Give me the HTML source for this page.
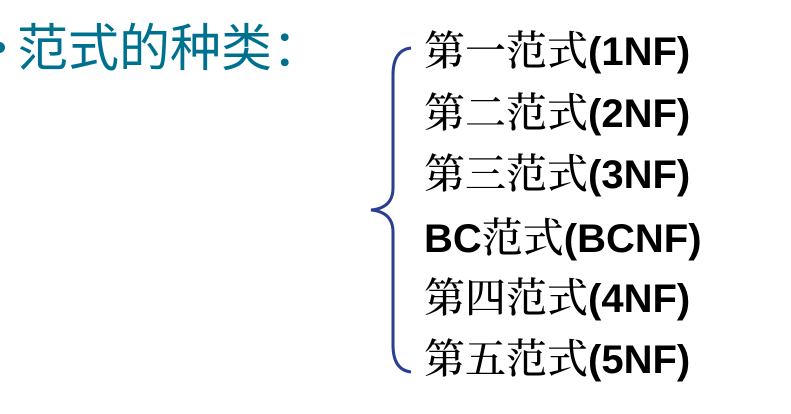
<!DOCTYPE html>
<html><head><meta charset="utf-8"><style>
body{margin:0;width:791px;height:414px;background:#fff;position:relative;overflow:hidden}
.t{position:absolute;left:17px;top:22px;font:51px "Liberation Sans","Noto Sans CJK SC",sans-serif;color:#00708f;white-space:nowrap;line-height:54px}
.dot{position:absolute;left:-6px;top:42px;width:11px;height:11px;border-radius:50%;background:#00708f}
.l{position:absolute;left:424px;font:bold 40px "Liberation Sans","Noto Serif CJK SC",serif;color:#000;white-space:nowrap;line-height:44px}
.l span{font-weight:500;font-size:41px}
</style></head><body>
<div class="dot"></div>
<div class="t">范式的种类：</div>
<svg style="position:absolute;left:0;top:0" width="791" height="414">
<path d="M411 48 Q393 50 393 75 L393 188 Q393 208 371 210 Q393 212 393 232 L393 345 Q393 370 411 372" fill="none" stroke="#2a3f91" stroke-width="3"/>
</svg>
<div class="l" style="top:29px"><span>第一范式</span>(1NF)</div>
<div class="l" style="top:91px"><span>第二范式</span>(2NF)</div>
<div class="l" style="top:152px"><span>第三范式</span>(3NF)</div>
<div class="l" style="top:216px">BC<span>范式</span>(BCNF)</div>
<div class="l" style="top:276px"><span>第四范式</span>(4NF)</div>
<div class="l" style="top:337px"><span>第五范式</span>(5NF)</div>
</body></html>
